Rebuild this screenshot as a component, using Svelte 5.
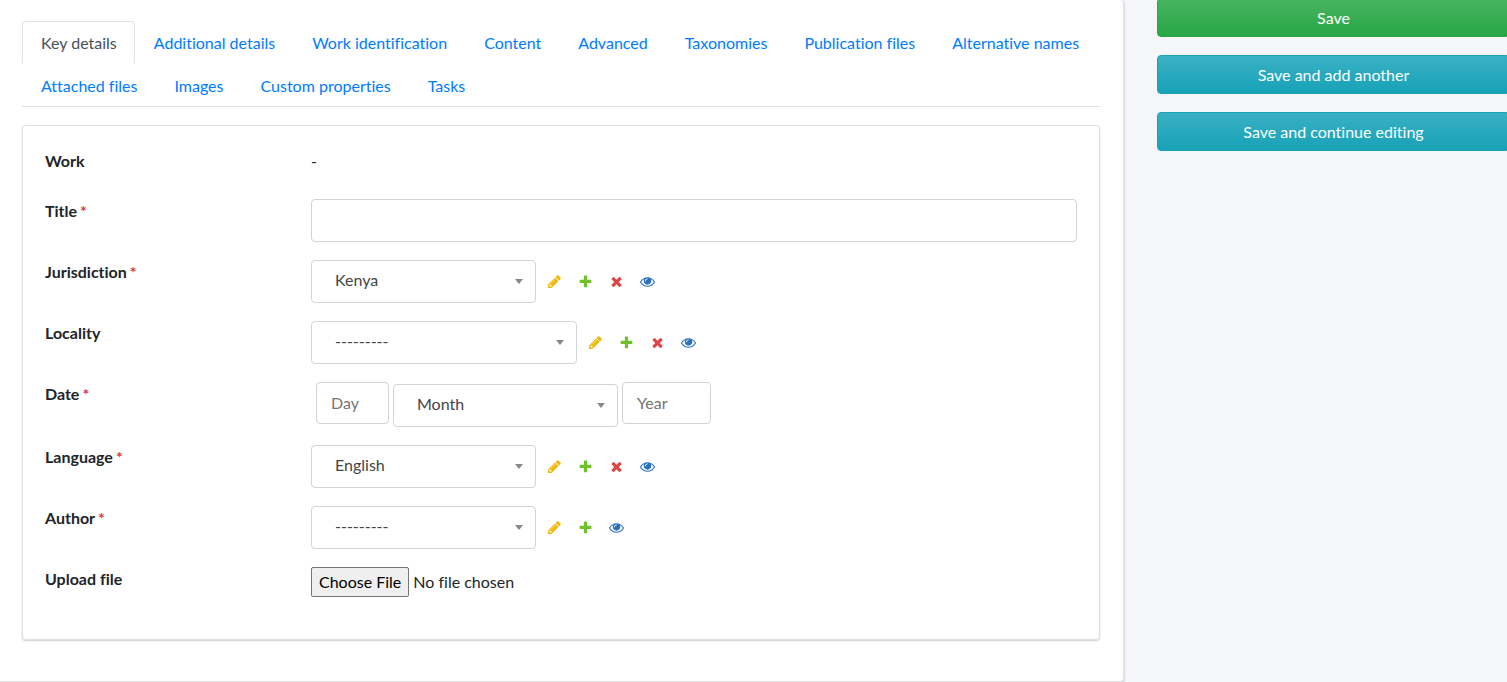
<script lang="ts">
	type Action = 'change' | 'add' | 'delete' | 'view';

	const tabs = [
		'Key details',
		'Additional details',
		'Work identification',
		'Content',
		'Advanced',
		'Taxonomies',
		'Publication files',
		'Alternative names',
		'Attached files',
		'Images',
		'Custom properties',
		'Tasks',
	];

	// 1792-unit icon set used for the related-object links
	const icons: Record<Action, { color: string; path: string }> = {
		change: {
			color: '#efb80b',
			path: 'M491 1536l91-91-235-235-91 91v107h128v128h107zm523-928q0-22-22-22-10 0-17 7l-542 542q-7 7-7 17 0 22 22 22 10 0 17-7l542-542q7-7 7-17zm-54-192l416 416-832 832h-416v-416zm683 96q0 53-37 90l-166 166-416-416 166-165q36-38 90-38 53 0 91 38l235 234q37 39 37 91z',
		},
		add: {
			color: '#70bf2b',
			path: 'M1600 796v192q0 40-28 68t-68 28h-416v416q0 40-28 68t-68 28h-192q-40 0-68-28t-28-68v-416h-416q-40 0-68-28t-28-68v-192q0-40 28-68t68-28h416v-416q0-40 28-68t68-28h192q40 0 68 28t28 68v416h416q40 0 68 28t28 68z',
		},
		delete: {
			color: '#dd4646',
			path: 'M1490 1322q0 40-28 68l-136 136q-28 28-68 28t-68-28l-294-294-294 294q-28 28-68 28t-68-28l-136-136q-28-28-28-68t28-68l294-294-294-294q-28-28-28-68t28-68l136-136q28-28 68-28t68 28l294 294 294-294q28-28 68-28t68 28l136 136q28 28 28 68t-28 68l-294 294 294 294q28 28 28 68z',
		},
		view: {
			color: '#2b70bf',
			path: 'M1664 960q-152-236-381-353 61 104 61 225 0 185-131.5 316.5t-316.5 131.5-316.5-131.5-131.5-316.5q0-121 61-225-229 117-381 353 133 205 333.5 326.5t434.5 121.5 434.5-121.5 333.5-326.5zm-720-384q0-20-14-34t-34-14q-125 0-214.5 89.5t-89.5 214.5q0 20 14 34t34 14 34-14 14-34q0-86 61-147t147-61q20 0 34-14t14-34zm848 384q0 34-20 69-140 230-376.5 368.5t-499.5 138.5-499.5-139-376.5-368q-20-35-20-69t20-69q140-229 376.5-368t499.5-139 499.5 139 376.5 368q20 35 20 69z',
		},
	};

	const all: Action[] = ['change', 'add', 'delete', 'view'];

	let active = $state('Key details');
</script>

{#snippet label(id: string, text: string, required = false)}
	<label for={id}>{text}{#if required}<span class="required">*</span>{/if}</label>
{/snippet}

{#snippet dropdown(id: string, value: string, wide = false)}
	<div class="select" class:wide>
		<select {id} aria-label={id}>
			<option>{value}</option>
		</select>
	</div>
{/snippet}

{#snippet related(id: string, actions: Action[])}
	<div class="related">
		{#each actions as action}
			<a href="#{action}-{id}" title="{action} {id}" aria-label="{action} {id}">
				<svg viewBox="0 0 1792 1792" fill={icons[action].color}><path d={icons[action].path} /></svg>
			</a>
		{/each}
	</div>
{/snippet}

<div class="page">
	<main>
		<ul class="tabs">
			{#each tabs as tab}
				<li>
					<a href="#{tab.toLowerCase().replaceAll(' ', '-')}" class:active={active === tab} onclick={() => (active = tab)}>{tab}</a>
				</li>
			{/each}
		</ul>

		<form class="card" id="work-form">
			<div class="row readonly">
				<span class="label">Work</span>
				<div class="field">-</div>
			</div>
			<div class="row">
				{@render label('title', 'Title', true)}
				<div class="field"><input class="control" id="title" type="text" /></div>
			</div>
			<div class="row">
				{@render label('jurisdiction', 'Jurisdiction', true)}
				<div class="field">
					{@render dropdown('jurisdiction', 'Kenya')}
					{@render related('jurisdiction', all)}
				</div>
			</div>
			<div class="row">
				{@render label('locality', 'Locality')}
				<div class="field">
					{@render dropdown('locality', '---------', true)}
					{@render related('locality', all)}
				</div>
			</div>
			<div class="row">
				{@render label('day', 'Date', true)}
				<div class="field date">
					<input class="control day" id="day" type="text" placeholder="Day" />
					{@render dropdown('month', 'Month')}
					<input class="control year" type="text" placeholder="Year" aria-label="Year" />
				</div>
			</div>
			<div class="row">
				{@render label('language', 'Language', true)}
				<div class="field">
					{@render dropdown('language', 'English')}
					{@render related('language', all)}
				</div>
			</div>
			<div class="row">
				{@render label('author', 'Author', true)}
				<div class="field">
					{@render dropdown('author', '---------')}
					{@render related('author', ['change', 'add', 'view'])}
				</div>
			</div>
			<div class="row">
				{@render label('upload', 'Upload file')}
				<div class="field"><input id="upload" type="file" /></div>
			</div>
		</form>
	</main>

	<aside>
		<button class="btn success" type="submit" form="work-form">Save</button>
		<button class="btn info" type="submit" form="work-form">Save and add another</button>
		<button class="btn info" type="submit" form="work-form">Save and continue editing</button>
	</aside>
</div>

<style>
	:global(body) { margin: 0; background: #f4f6f9; overflow-x: hidden; }
	.page { display: grid; grid-template-columns: minmax(0, 1fr) 353px; gap: 33px; align-items: start; margin-right: -3px; font: 16px/24px Lato, "Liberation Sans", sans-serif; font-variant-ligatures: none; color: #212529; }
	.page *, .page *::before, .page *::after { box-sizing: border-box; }

	main { padding: 21px 23px 41px 22px; background: #fff; border: 1px solid #dfdfdf; border-width: 0 1px 1px 0; border-radius: 0 4px 4px 0; box-shadow: 0 1px 3px rgba(0, 0, 0, .2); }

	.tabs { display: flex; flex-wrap: wrap; margin: 0 0 18px; padding: 0; list-style: none; box-shadow: inset 0 -1px #dee2e6; }
	.tabs a { display: block; padding: 9px 17px 8px 18px; border: 1px solid transparent; border-radius: 4px 4px 0 0; color: #007bff; text-decoration: none; }
	.tabs a.active { color: #495057; border-color: #dee2e6 #dee2e6 #fff; }

	.card { display: flex; flex-direction: column; gap: 18px; padding: 23px 22px 42px; border: 1px solid #dfdfdf; border-radius: 4px; box-shadow: 0 1px 2px rgba(0, 0, 0, .2); }
	.row { display: grid; grid-template-columns: 266px minmax(0, 1fr); }
	.readonly { min-height: 32px; }
	label, .label { font-weight: 700; }
	.required { margin-left: 3px; color: #dc3545; }
	.field { display: flex; align-items: center; }
	.readonly .field { align-items: flex-start; }

	.control { width: 100%; height: 43px; padding: 6px 14px 8px; border: 1px solid #ced4da; border-radius: 4px; background: #fff; font: inherit; color: #495057; }
	.control::placeholder { color: #757575; opacity: 1; }
	.date { gap: 4px; min-height: 45px; padding-left: 5px; align-items: flex-start; }
	.date .select { align-self: flex-end; }
	.date .control { height: 42px; }
	.date .day { width: 73px; }
	.date .year { width: 89px; }

	.select { position: relative; width: 225px; }
	.select.wide { width: 266px; }
	.select::after { content: ''; position: absolute; top: 19px; right: 13px; border: 4px solid transparent; border-top: 5px solid #888; border-bottom: 0; pointer-events: none; }
	select { display: block; width: 100%; height: 43px; padding: 0 30px 4px 23px; border: 1px solid #ced4da; border-radius: 4px; background: #fff; appearance: none; font: inherit; color: #444; }

	.related { display: flex; gap: 16px; margin-left: 11px; }
	.related a, .related svg { display: block; width: 15px; height: 15px; }

	input[type='file'] { font: inherit; color: inherit; }
	input[type='file']::file-selector-button { height: 30px; margin: 0 4px 0 0; padding: 0 7px; border: 1px solid #767676; border-radius: 2px; background: #efefef; font: inherit; color: #000; }

	aside { display: flex; flex-direction: column; gap: 18px; margin-top: -2px; }
	.btn { height: 39px; padding: 0 12px; border: 1px solid; border-radius: 4px; font: inherit; color: #fff; cursor: pointer; }
	.success { background: linear-gradient(#48b461, #28a745); border-color: #28a745; }
	.info { background: linear-gradient(#3ab0c3, #17a2b8); border-color: #17a2b8; }
</style>
